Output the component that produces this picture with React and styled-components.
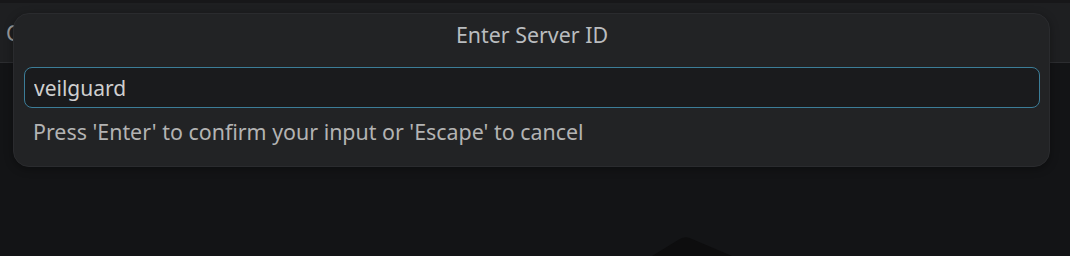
import React from "react";
import styled, { createGlobalStyle } from "styled-components";

const GlobalStyle = createGlobalStyle`
  html, body {
    margin: 0;
    padding: 0;
    background: #131416;
  }
  body {
    font-family: "Noto Sans", "DejaVu Sans", sans-serif;
  }
`;

const Page = styled.div`
  position: relative;
  width: 1070px;
  height: 256px;
  overflow: hidden;
  background: #131416;
  display: flex;
  flex-direction: column;
`;

const TopStrip = styled.div`
  height: 3px;
  background: #171719;
`;

const Toolbar = styled.div`
  height: 59px;
  display: flex;
  align-items: center;
  padding-left: 6px;
  background: #1e1f21;
  border-bottom: 1px solid #2c2d30;
  color: #9a9a9a;
  font-size: 21px;
`;

const Body = styled.div`
  flex: 1;
  display: flex;
  align-items: flex-end;
  padding-left: 652px;
`;

const Mark = styled.svg`
  display: block;
`;

const Dialog = styled.div`
  position: absolute;
  left: 13px;
  top: 13px;
  width: 1037px;
  height: 154px;
  box-sizing: border-box;
  padding: 0 9px 0 10px;
  background: #222325;
  border: 1px solid #2a2b2e;
  border-radius: 16px;
  box-shadow: 0 2px 8px rgba(0, 0, 0, 0.35);
  display: flex;
  flex-direction: column;
`;

const Title = styled.div`
  height: 53px;
  display: flex;
  align-items: center;
  justify-content: center;
  padding-bottom: 12px;
  box-sizing: border-box;
  color: #b9bcbf;
  font-size: 21.4px;
`;

const Input = styled.input`
  height: 41px;
  box-sizing: border-box;
  padding: 0 9px;
  background: #1a1b1d;
  border: 1px solid #3c7d98;
  border-radius: 8px;
  color: #cfcfcf;
  font-family: inherit;
  font-size: 21px;
  outline: none;
`;

const Hint = styled.div`
  margin-top: 9px;
  padding-left: 9px;
  color: #b3b3b3;
  font-size: 21.4px;
`;

export default function App() {
  return (
    <>
      <GlobalStyle />
      <Page>
        <TopStrip />
        <Toolbar>C</Toolbar>
        <Body>
          <Mark width="90" height="20" viewBox="0 0 90 20">
            <path d="M0 20 L26 4 Q33 -1 40 3 L80 20 Z" fill="#0d0d0e" />
          </Mark>
        </Body>
        <Dialog>
          <Title>Enter Server ID</Title>
          <Input defaultValue="veilguard" />
          <Hint>Press 'Enter' to confirm your input or 'Escape' to cancel</Hint>
        </Dialog>
      </Page>
    </>
  );
}
